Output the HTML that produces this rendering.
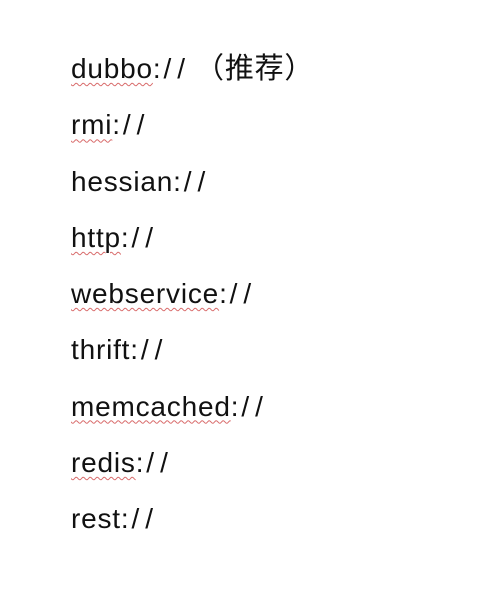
<!DOCTYPE html>
<html><head><meta charset="utf-8"><style>
html,body{margin:0;padding:0;background:#fff;width:482px;height:614px;overflow:hidden}
.wrap{position:absolute;left:71px;top:41px;font-family:"Liberation Sans","Noto Sans CJK SC",sans-serif;font-size:28px;line-height:56.25px;color:#111;letter-spacing:0.8px}
.w{text-decoration:underline wavy #d86a6a;text-decoration-thickness:1px;text-underline-offset:4px}
.s{letter-spacing:6px;margin-left:2px}
.c{font-size:29px;margin-left:4px}
</style></head><body>
<div class="wrap">
<div><span class="w">dubbo</span>:<span class="s">//</span><span class="c">（推荐）</span></div>
<div><span class="w">rmi</span>:<span class="s">//</span></div>
<div>hessian:<span class="s">//</span></div>
<div><span class="w">http</span>:<span class="s">//</span></div>
<div><span class="w">webservice</span>:<span class="s">//</span></div>
<div>thrift:<span class="s">//</span></div>
<div><span class="w">memcached</span>:<span class="s">//</span></div>
<div><span class="w">redis</span>:<span class="s">//</span></div>
<div>rest:<span class="s">//</span></div>
</div>
</body></html>
